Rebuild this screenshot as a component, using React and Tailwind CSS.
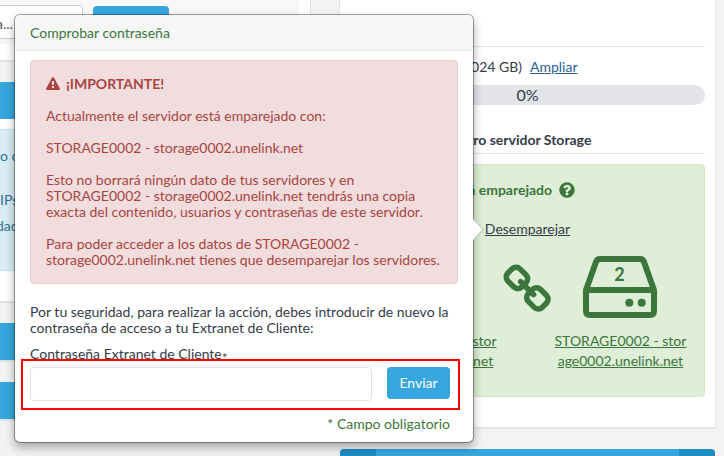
// Storage server panel with the "Comprobar contraseña" popover open
import { useState } from "react";

function WarningIcon() {
  return (
    <svg viewBox="0 0 1792 1792" className="w-[14px] h-[14px] fill-current" aria-hidden="true">
      <path d="M1024 1375v-190q0-14-9.500-23.500t-22.500-9.500h-192q-13 0-22.500 9.500t-9.500 23.500v190q0 14 9.500 23.500t22.500 9.500h192q13 0 22.500-9.500t9.500-23.500zm-2-374l18-459q0-12-10-19-13-11-24-11h-220q-11 0-24 11-10 7-10 21l17 457q0 10 10 16.500t24 6.500h185q14 0 23.500-6.500t10.500-16.500zm-14-934l768 1408q35 63-2 126-17 29-46.500 46t-63.500 17h-1536q-34 0-63.500-17t-46.500-46q-37-63-2-126l768-1408q17-31 47-49t65-18 65 18 47 49z" />
    </svg>
  );
}

function QuestionIcon() {
  return (
    <svg viewBox="0 0 1792 1792" className="w-[18px] h-[18px] fill-current" aria-hidden="true">
      <path d="M1024 1376v-192q0-14-9-23t-23-9h-192q-14 0-23 9t-9 23v192q0 14 9 23t23 9h192q14 0 23-9t9-23zm256-672q0-88-55.500-163t-138.500-116-170-41q-243 0-371 213-15 24 8 42l132 100q7 6 19 6 16 0 25-12 53-68 86-92 34-24 86-24 48 0 85.500 26t37.500 59q0 38-20 61t-68 45q-63 28-115.500 86.500t-52.500 125.500v36q0 14 9 23t23 9h192q14 0 23-9t9-23q0-19 21.500-49.500t54.500-49.500q32-18 49-28.500t46-35 44.500-48 28-60.500 12.500-81zm384 192q0 209-103 385.500t-279.500 279.500-385.500 103-385.500-103-279.500-279.500-103-385.500 103-385.500 279.500-279.500 385.500-103 385.500 103 279.500 279.500 103 385.500z" />
    </svg>
  );
}

function ChainIcon() {
  return (
    <svg viewBox="0 0 1792 1792" className="w-[52px] h-[52px] fill-[#3c763d]" aria-hidden="true">
      <path d="M1456 1216q0-40-28-68l-208-208q-28-28-68-28-42 0-72 32 3 3 19 18.500t21.500 21.500 15 19 13 25.500 3.500 27.500q0 40-28 68t-68 28q-15 0-27.500-3.500t-25.500-13-19-15-21.500-21.500-18.500-19q-33 31-33 73 0 40 28 68l206 207q27 27 68 27 40 0 68-26l147-146q28-28 28-67zm-703-705q0-40-28-68l-206-207q-28-28-68-28-39 0-68 27l-147 146q-28 28-28 67 0 40 28 68l208 208q27 27 68 27 42 0 72-31-3-3-19-18.500t-21.500-21.500-15-19-13-25.500-3.500-27.500q0-40 28-68t68-28q15 0 27.500 3.500t25.500 13 19 15 21.500 21.500 18.500 19q33-31 33-73zm895 705q0 120-85 203l-147 146q-83 83-203 83-121 0-204-85l-206-207q-83-83-83-203 0-123 88-209l-88-88q-86 88-208 88-120 0-204-84l-208-208q-84-84-84-204t85-203l147-146q83-83 203-83 121 0 204 85l206 207q83 83 83 203 0 123-88 209l88 88q86-88 208-88 120 0 204 84l208 208q84 84 84 204z" />
    </svg>
  );
}

function ServerIcon({ number }) {
  return (
    <svg viewBox="0 0 74 62" className="w-[74px] h-[62px]">
      <path
        d="M3 34 L13 6 Q14 3 17 3 H57 Q60 3 61 6 L71 34 V55 Q71 59 67 59 H7 Q3 59 3 55 Z M3 34 H71"
        fill="none"
        stroke="#3c763d"
        strokeWidth="6"
        strokeLinejoin="round"
      />
      <circle cx="46.300" cy="46.700" r="4" fill="#3c763d" />
      <circle cx="58.700" cy="46.700" r="4" fill="#3c763d" />
      <text x="36.500" y="25" textAnchor="middle" fontSize="18" fontWeight="700" fill="#3c763d">
        {number}
      </text>
    </svg>
  );
}

function Server({ number, lines }) {
  return (
    <div className="flex flex-col items-center gap-[13px]">
      <ServerIcon number={number} />
      <a href="#server" className="text-center text-[#3c763d] underline whitespace-nowrap">
        {lines[0]}
        <br />
        {lines[1]}
      </a>
    </div>
  );
}

function LeftColumn() {
  return (
    <div className="flex flex-col gap-5 text-[#31708f]">
      <div className="h-[62px] bg-white border-r border-r-[#e1e1e6] border-b-2 border-b-[#e3e4ea] pr-[11px]">
        <div className="h-11 bg-[#f8f8f8] pt-[5px] flex items-start gap-[10px]">
          <div className="w-[83px] h-[34px] bg-white border border-l-0 border-[#ccc] rounded-r text-[#555]">
            <p className="-ml-1 leading-9">a...</p>
          </div>
          <button aria-label="Buscar" className="mt-px w-[76px] h-[34px] rounded-sm bg-[#36a7de]" />
        </div>
      </div>

      <div className="bg-white border-b-2 border-[#e3e4ea] h-[221px]">
        <div className="h-[37px] bg-[#36a7de]" />
        <div className="mt-[10px] h-[142px] bg-[#d9edf7] border-y border-[#bce8f1] pt-4 leading-5 whitespace-nowrap">
          <p>o c</p>
          <p className="mt-6">IPs</p>
          <p className="mt-[6px] -ml-1">dad</p>
        </div>
      </div>

      <div className="h-[39px] bg-[#36a7de] border-b-2 border-[#e3e4ea]" />
      <div className="h-[39px] bg-[#36a7de] border-b-2 border-[#e3e4ea]" />
    </div>
  );
}

function RightColumn() {
  return (
    <div className="flex flex-col gap-5">
      <div className="bg-white border-x border-[#e3e4ea] border-b-2 px-[10px] pb-[30px]">
        <div className="h-[47px] border-b border-[#e5e5e5]" />
        <div className="mt-[10px] flex gap-2 leading-5">
          <span className="w-[172px] text-right">Espacio: 0 GB (1024 GB)</span>
          <a href="#ampliar" className="text-[#2d5f95] underline">Ampliar</a>
        </div>
        <div className="mt-2 h-5 rounded-full bg-[#e3e4ea] text-center text-base leading-5">0%</div>
        <h2 className="mt-[25px] pb-[3px] border-b border-[#e3e4ea] pl-[18px] font-bold leading-5">
          Emparejar con otro servidor Storage
        </h2>

        <div className="mt-[10px] rounded border border-[#d0e9c6] bg-[#deeed7] pt-[15px] pb-[25px] text-[#3c763d] leading-5">
          <p className="flex items-center justify-center gap-[6px] pr-[30px] font-bold">
            Está emparejado
            <QuestionIcon />
          </p>
          <p className="mt-[19px] text-center">
            <a href="#desemparejar" className="text-[#333c48] underline">Desemparejar</a>
          </p>
          <div className="mt-[17px] flex justify-center gap-[2px] pr-1">
            <Server number="1" lines={["STORAGE0001 - stor", "age0001.unelink.net"]} />
            <div className="mt-2 ml-1 -mr-[2px]">
              <ChainIcon />
            </div>
            <Server number="2" lines={["STORAGE0002 - stor", "age0002.unelink.net"]} />
          </div>
        </div>
      </div>

      <div className="h-[37px] mx-px rounded-sm bg-[#36a7de] border-x-[36px] border-[#1d8dc4]" />
    </div>
  );
}

function PasswordPopover() {
  const [password, setPassword] = useState("");

  return (
    <div className="absolute left-[14px] top-[14px] w-[460px] rounded-md border border-black/35 bg-white bg-clip-padding shadow-[0_5px_10px_rgba(0,0,0,0.3)]">
      <h3 className="rounded-t-md border-b border-[#e8e8e8] bg-[#f6f6f6] pl-[15px] pt-2 pb-[7px] leading-5 text-[#3c763d]">
        Comprobar contraseña
      </h3>

      <div className="pt-[9px] px-[15px] pb-[10px] leading-4">
        <div className="rounded border border-[#ebccd1] bg-[#f1dddd] p-[15px] flex flex-col gap-4 text-[#a94442]">
          <p className="flex items-center gap-[6px] font-bold">
            <WarningIcon />
            ¡IMPORTANTE!
          </p>
          <p>Actualmente el servidor está emparejado con:</p>
          <p>STORAGE0002 - storage0002.unelink.net</p>
          <p>
            Esto no borrará ningún dato de tus servidores y en
            <br />
            STORAGE0002 - storage0002.unelink.net tendrás una copia
            <br />
            exacta del contenido, usuarios y contraseñas de este servidor.
          </p>
          <p>
            Para poder acceder a los datos de STORAGE0002 -
            <br />
            storage0002.unelink.net tienes que desemparejar los servidores.
          </p>
        </div>

        <p className="mt-5">
          Por tu seguridad, para realizar la acción, debes introducir de nuevo la
          <br />
          contraseña de acceso a tu Extranet de Cliente:
        </p>

        <form onSubmit={(e) => e.preventDefault()} className="mt-[10px] pr-2">
          <label htmlFor="password" className="block h-4">
            Contraseña Extranet de Cliente<span className="align-sub leading-none text-[#555]">*</span>
          </label>
          <div className="relative mt-[5px] flex items-start gap-[15px]">
            <input
              id="password"
              type="password"
              value={password}
              onChange={(e) => setPassword(e.target.value)}
              className="min-w-0 flex-1 h-[34px] rounded-sm border border-[#e0e1e8] bg-white px-3 outline-none"
            />
            <button type="submit" className="w-[63px] h-8 rounded-sm bg-[#36a7de] text-white">
              Enviar
            </button>
            {/* highlight frame */}
            <div className="pointer-events-none absolute -left-[9px] -right-[10px] -top-2 -bottom-[9px] border-2 border-[#ff0000]" />
          </div>
          <p className="mt-[15px] text-right text-[#3c763d]">* Campo obligatorio</p>
        </form>
      </div>

      {/* arrow */}
      <div className="absolute -right-[8px] top-[207px] w-[15px] h-[15px] rotate-45 border-t border-r border-[#bbb] bg-white" />
    </div>
  );
}

export default function App() {
  return (
    <div className="relative h-screen overflow-hidden bg-[#f3f3f3] font-[Lato,sans-serif] text-sm text-[#333c48]">
      <div className="grid grid-cols-[311fr_377fr] gap-7 pr-2">
        <LeftColumn />
        <RightColumn />
      </div>
      <PasswordPopover />
    </div>
  );
}
